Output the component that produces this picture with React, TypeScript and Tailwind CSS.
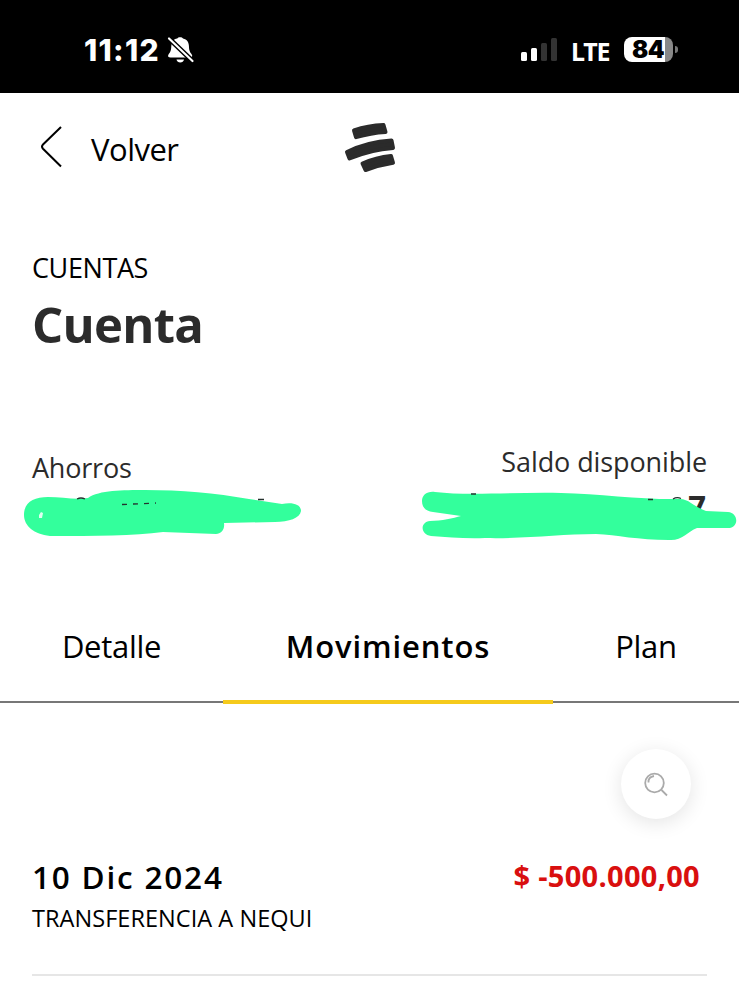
import type { ReactNode } from "react";

function StatusBar() {
  return (
    <header className="flex h-[93px] items-start bg-black pl-[84px] text-white">
      <div className="mt-[35px] w-[83px] font-['Inter'] text-[30px] leading-[30px] font-extrabold tracking-[1.3px] whitespace-nowrap">
        11:12
      </div>
      <svg className="mt-[36px] h-[29px] w-[28px]" viewBox="0 0 28 29" fill="white">
        <path d="M3.5 21.5c-2 0-3-1-2.2-2.5 1-2 2.7-3 2.9-7.500C4.500 6 6.500 3 10.300 2.500 11 .8 15.200.8 16 2.500c4 .8 6 3.800 6 9 .2 4.500 2 5.500 3 7.500.7 1.500-.3 2.500-2 2.500z" />
        <path d="M9.500 23.500h7.500c-.5 4-7 4-7.500 0z" />
        <path d="M1.500 2 26 25.500" stroke="black" strokeWidth="5" />
        <path d="M2 2.500 25.500 25" stroke="white" strokeWidth="2.200" strokeLinecap="round" />
      </svg>
      <div className="mt-[38px] ml-[326px] flex h-[23px] items-end gap-[4px]">
        <div className="h-[9px] w-[6px] rounded-[1.500px] bg-white" />
        <div className="h-[13px] w-[6px] rounded-[1.500px] bg-white" />
        <div className="h-[18px] w-[6px] rounded-[1.500px] bg-[#333]" />
        <div className="h-[23px] w-[6px] rounded-[1.500px] bg-[#333]" />
      </div>
      <div className="mt-[36px] ml-[14px] w-[53px] font-['Noto_Sans'] text-[25px] leading-[30px] font-bold tracking-[-1.2px]">
        LTE
      </div>
      <div className="mt-[37px] flex h-[25px] w-[49px] items-center rounded-[8px] bg-[linear-gradient(90deg,#fff_83%,#888_83%)] pl-[8px] font-['Inter'] text-[24px] leading-[25px] font-black tracking-[-0.5px] text-black">
        84
      </div>
      <div className="mt-[46px] ml-[2px] h-[7px] w-[3px] rounded-r-full bg-[#777]" />
    </header>
  );
}

function NavBar() {
  return (
    <nav className="flex h-[107px] items-start pl-[40px]">
      <svg className="mt-[32px] h-[44px] w-[24px]" viewBox="0 0 24 44" fill="none" stroke="black" strokeWidth="2">
        <path d="M21 2 3 19.500Q1 21.600 3 23.700L21 41.500" />
      </svg>
      <span className="mt-[36px] ml-[27px] w-[88px] font-['Open_Sans'] text-[31px] leading-[40px] tracking-[-0.5px]">Volver</span>
      <svg className="mt-[27px] ml-[164px] h-[56px] w-[56px]" viewBox="0 0 56 56" fill="#2b2b2b" stroke="#2b2b2b" strokeWidth="4" strokeLinejoin="round">
        <path d="M11 10.500Q25 5.500 40.500 5L42.500 12Q28 12.800 13 17.200Z" />
        <path d="M4 32Q24 22 48.500 20.500L50 28Q28 29.500 6.500 38.500Z" />
        <path d="M19.500 43.500Q33 37.500 48 36L50 42.800Q36 45 22.500 50Z" />
      </svg>
    </nav>
  );
}

function Balances() {
  return (
    <section className="relative mt-[86px] h-[132px] px-[32px] pt-[4px] font-['Open_Sans'] text-[27px] leading-[36px] text-[#2b2b2b]">
      <div className="flex justify-between">
        <span className="mt-[6px] tracking-[-0.2px]">Ahorros</span>
        <span className="tracking-[-0.1px]">Saldo disponible</span>
      </div>
      <div className="absolute top-[46px] right-[33px] font-['Open_Sans'] text-[31px] leading-[40px] font-bold">7</div>
      <svg className="absolute top-0 left-0 h-[132px] w-[739px]" viewBox="0 440 739 132" fill="#33ff9c">
        <path d="M24 515C24 502 34 497 48 497C62 497 75 500 88 498C99 490 123 490 145 490C181 490 215 493 249 499L282 504C292 502 301 504 301 511C300 518 289 522 275 522L224 523C225 530 221 534 216 534L163 532C134 536 95 536 50 536C34 534 24 526 24 515Z" />
        <path d="M422 501C422 495 427 491 435 492C467 496 514 492 561 493C600 494 646 500 680 499C689 499 694 507 706 511L728 512C739 513 739 528 728 528L697 528C687 532 682 541 669 540C638 540 617 535 596 534C560 534 524 539 485 538C466 539 448 537 431 536C420 534 420 522 430 521C442 521 453 518 461 516L433 512C425 511 422 507 422 501Z" />
        <g fill="none" stroke="#26332f" strokeWidth="1.300">
          <path d="M77 499Q81 497 85 499M258 499.500h6" />
          <path d="M122 504.500l34-1.500" strokeDasharray="5 6" />
          <path d="M471 494h5M648 499.500h5M673 499Q677 496.500 681 498.500" />
        </g>
        <path d="M39 515l2-3 2 1-1 5-3 0z" fill="#dffff0" />
      </svg>
    </section>
  );
}

function Tab({ children, className }: { children: ReactNode; className: string }) {
  return <div className={`text-center whitespace-nowrap ${className}`}>{children}</div>;
}

function Tabs() {
  return (
    <div className="mt-[48px] flex items-start font-['Open_Sans'] text-[31px] leading-[52px] text-black">
      <Tab className="h-[83px] w-[223px] border-b-2 border-[#777] tracking-[-0.3px]">Detalle</Tab>
      <Tab className="h-[84px] w-[330px] border-b-4 border-[#f5ca1c] font-semibold tracking-[0.9px]">Movimientos</Tab>
      <Tab className="h-[83px] w-[186px] border-b-2 border-[#777] tracking-[-0.3px]">Plan</Tab>
    </div>
  );
}

function Movements() {
  return (
    <main>
      <div className="flex justify-end pt-[45px] pr-[48px]">
        <button className="flex size-[70px] items-center justify-center rounded-full bg-white shadow-[0_4px_20px_rgba(0,0,0,0.11)]">
          <svg className="size-[28px]" viewBox="0 0 28 28" fill="none" stroke="#aaa" strokeWidth="1.800">
            <circle cx="12.500" cy="13" r="9.300" />
            <path d="m19.500 20 5.500 5.500M6.500 12.500q-.5-5.500 5.500-6.500" />
          </svg>
        </button>
      </div>
      <article className="mx-[32px] h-[157px] border-b-2 border-[#e6e6e6]">
        <div className="flex items-start justify-between pt-[38px] pr-[7px]">
          <h2 className="font-['Open_Sans'] text-[31.5px] leading-[40px] font-semibold tracking-[1.8px] text-black">10 Dic 2024</h2>
          <span className="font-['Open_Sans'] text-[29px] leading-[38px] font-bold tracking-[0.3px] text-[#d90f0f]">$ -500.000,00</span>
        </div>
        <p className="mt-[1px] font-['Open_Sans'] text-[23.5px] leading-[40px] tracking-[0.05px] text-black">TRANSFERENCIA A NEQUI</p>
      </article>
    </main>
  );
}

export default function App() {
  return (
    <div className="h-[984px] w-[739px] overflow-hidden bg-white">
      <StatusBar />
      <NavBar />
      <div className="mt-[48px] ml-[32px] h-[106px]">
        <p className="font-['Open_Sans'] text-[27px] leading-[40px] tracking-[-0.4px] text-black">CUENTAS</p>
        <h1 className="mt-[4px] font-['Open_Sans'] text-[49px] leading-[64px] font-bold tracking-[-0.7px] text-[#2b2b2b]">Cuenta</h1>
      </div>
      <Balances />
      <Tabs />
      <Movements />
    </div>
  );
}
